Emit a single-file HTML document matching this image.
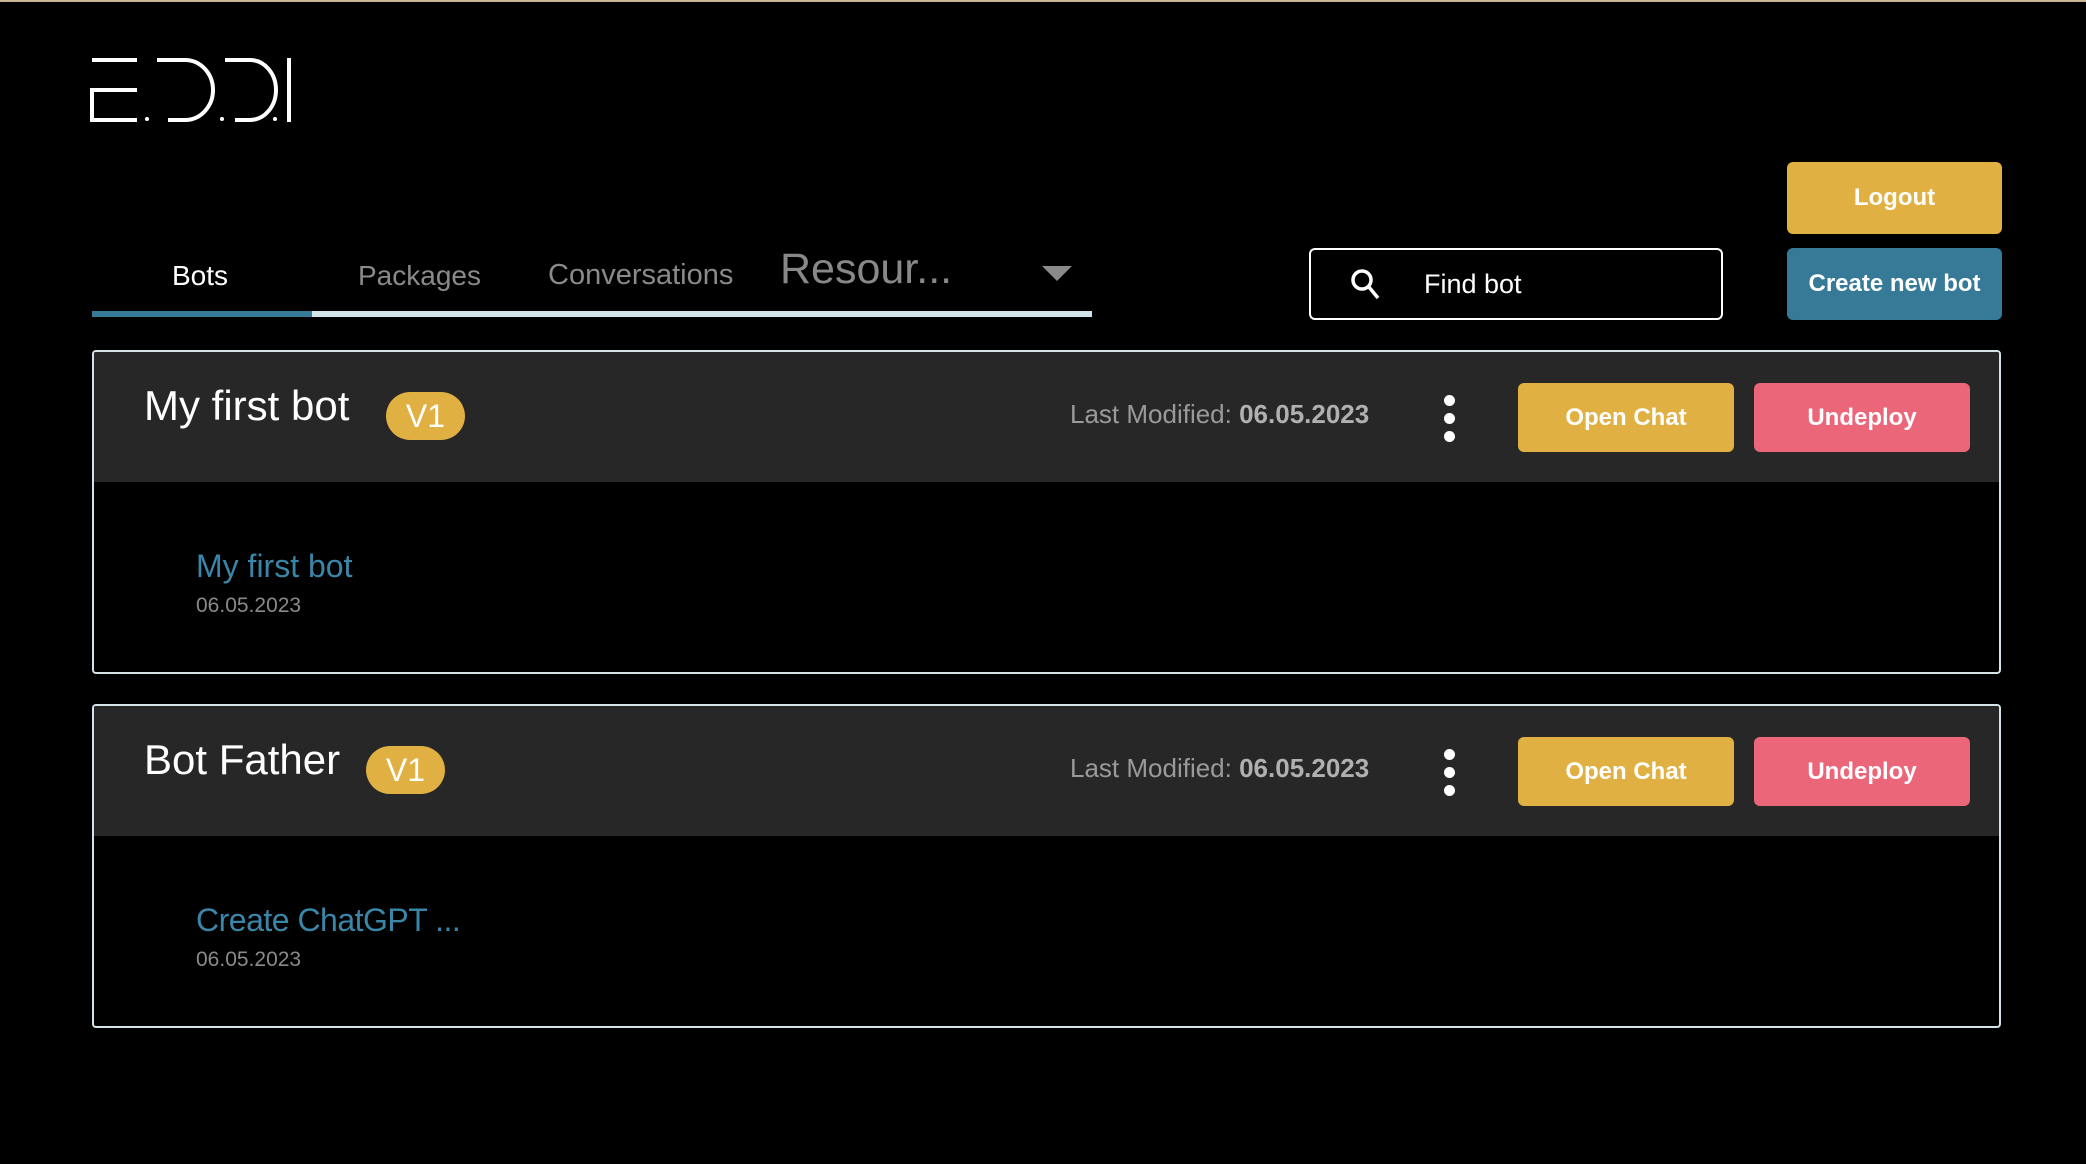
<!DOCTYPE html>
<html><head><meta charset="utf-8"><style>
*{margin:0;padding:0;box-sizing:border-box}
body{width:2086px;height:1164px;background:#000;font-family:"Liberation Sans",sans-serif;position:relative;overflow:hidden;color:#fff}
.a{position:absolute;white-space:nowrap}
.btn{position:absolute;border-radius:6px;color:#fff;font-weight:bold;font-size:24px;display:flex;align-items:center;justify-content:center}
.y{background:#e0b042}.b{background:#367a98}.p{background:#ec6679}
.card{position:absolute;left:92px;width:1909px;border:2px solid #d4e3e8;border-radius:4px;overflow:hidden}
.hd{position:absolute;left:0;top:0;width:100%;height:130px;background:#272727}
.ttl{font-size:42px}
.badge{position:absolute;background:#e0b042;border-radius:26px;color:#fff;font-size:32px;display:flex;align-items:center;justify-content:center;width:79px;height:48px}
.lm{font-size:26px;color:#9a9a9a}
.lm b{color:#b0b0b0}
.dot{position:absolute;width:11px;height:11px;border-radius:50%;background:#fff}
.lnk{font-size:32px;color:#3a86a8}
.dt{font-size:21px;color:#8a8a8a}
</style></head><body>
<div class="a" style="left:0;top:0;width:2086px;height:2px;background:#c7b596"></div>
<svg class="a" style="left:0;top:0" width="320" height="140" fill="none" stroke="#fff" stroke-width="4">
<path d="M92 60H137M137 90H92V120H137"/>
<path d="M157 60H185A28 30 0 0 1 185 120H168"/>
<path d="M225 60H250A26 30 0 0 1 250 120H235"/>
<path d="M289 58V122"/>
<circle cx="147" cy="119" r="2" fill="#fff" stroke="none"/>
<circle cx="222" cy="119" r="2" fill="#fff" stroke="none"/>
<circle cx="275" cy="119" r="2" fill="#fff" stroke="none"/>
</svg>
<div class="a" style="left:172px;top:260px;font-size:28px;color:#fff">Bots</div>
<div class="a" style="left:358px;top:260px;font-size:28px;color:#8a8a8a">Packages</div>
<div class="a" style="left:548px;top:259px;font-size:29px;color:#8a8a8a">Conversations</div>
<div class="a" style="left:780px;top:245px;font-size:43px;color:#888">Resour...</div>
<svg class="a" style="left:1042px;top:266px" width="30" height="16"><path d="M0 0H30L15 15Z" fill="#8a8a8a"/></svg>
<div class="a" style="left:92px;top:311px;width:1000px;height:6px;background:#d0e4ea"></div>
<div class="a" style="left:92px;top:311px;width:220px;height:6px;background:#367a98"></div>
<div class="a" style="left:1309px;top:248px;width:414px;height:72px;border:2px solid #fff;border-radius:6px"></div>
<svg class="a" style="left:1350px;top:268px" width="32" height="34" fill="none" stroke="#fff" stroke-width="3.5"><circle cx="12" cy="12" r="9"/><path d="M18.5 18.5L28 30"/></svg>
<div class="a" style="left:1424px;top:269px;font-size:27px;color:#fff">Find bot</div>
<div class="btn y" style="left:1787px;top:162px;width:215px;height:72px">Logout</div>
<div class="btn b" style="left:1787px;top:248px;width:215px;height:72px">Create new bot</div>

<div class="card" style="top:350px;height:324px">
<div class="hd"></div>
<div class="a ttl" style="left:50px;top:30px">My first bot</div>
<div class="badge" style="left:292px;top:40px">V1</div>
<div class="a lm" style="left:976px;top:47px">Last Modified: <b>06.05.2023</b></div>
<div class="dot" style="left:1350px;top:43px"></div><div class="dot" style="left:1350px;top:61px"></div><div class="dot" style="left:1350px;top:79px"></div>
<div class="btn y" style="left:1424px;top:31px;width:216px;height:69px">Open Chat</div>
<div class="btn p" style="left:1660px;top:31px;width:216px;height:69px">Undeploy</div>
<div class="a lnk" style="left:102px;top:196px">My first bot</div>
<div class="a dt" style="left:102px;top:242px">06.05.2023</div>
</div>

<div class="card" style="top:704px;height:324px">
<div class="hd"></div>
<div class="a ttl" style="left:50px;top:30px">Bot Father</div>
<div class="badge" style="left:272px;top:40px">V1</div>
<div class="a lm" style="left:976px;top:47px">Last Modified: <b>06.05.2023</b></div>
<div class="dot" style="left:1350px;top:43px"></div><div class="dot" style="left:1350px;top:61px"></div><div class="dot" style="left:1350px;top:79px"></div>
<div class="btn y" style="left:1424px;top:31px;width:216px;height:69px">Open Chat</div>
<div class="btn p" style="left:1660px;top:31px;width:216px;height:69px">Undeploy</div>
<div class="a lnk" style="left:102px;top:196px;letter-spacing:-0.5px">Create ChatGPT ...</div>
<div class="a dt" style="left:102px;top:242px">06.05.2023</div>
</div>
</body></html>
